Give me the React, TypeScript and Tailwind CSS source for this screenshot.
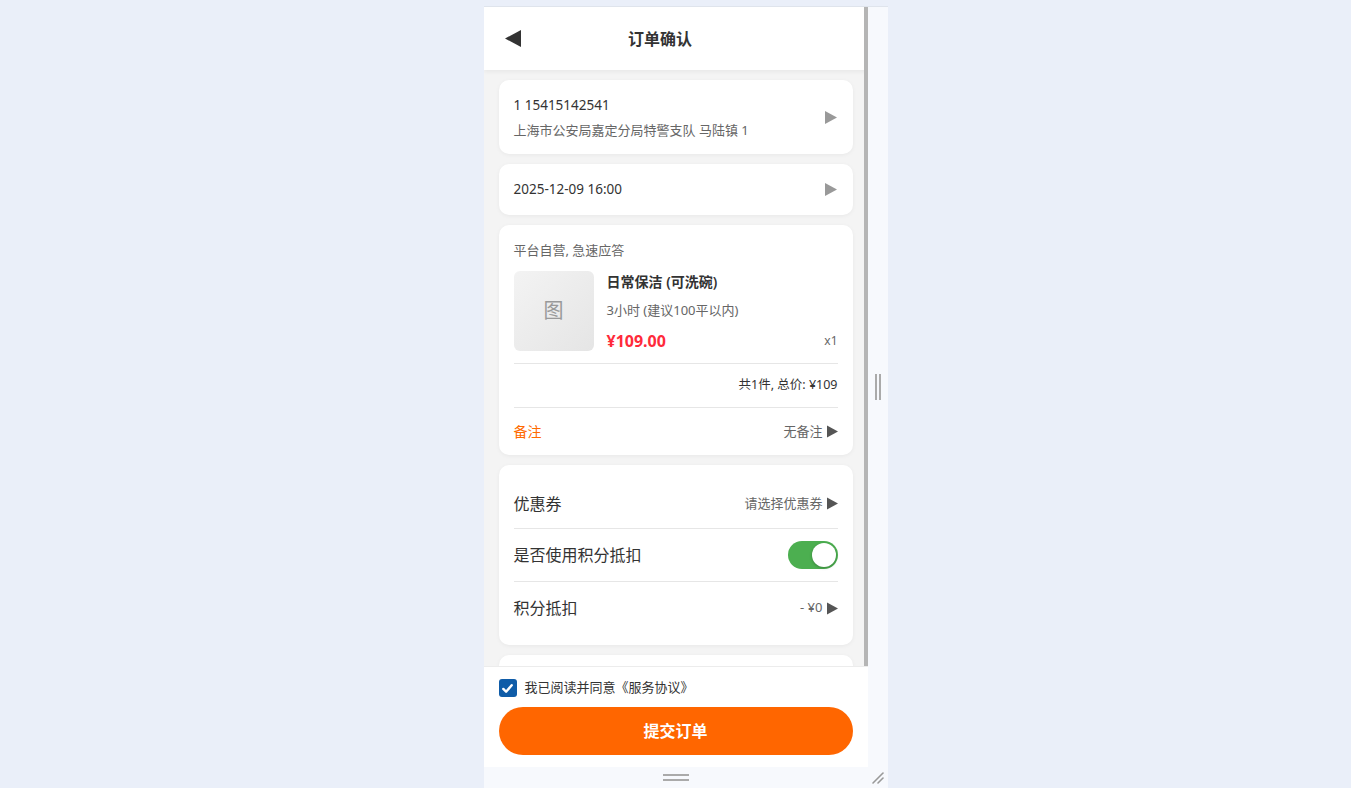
import React, { useState } from 'react';

const Arrow = ({ className = '' }: { className?: string }) => (
  <svg viewBox="0 0 12 13" className={className} fill="currentColor">
    <polygon points="0,0 12,6.5 0,13" />
  </svg>
);

const Card: React.FC<{ className?: string; children: React.ReactNode }> = ({ className = '', children }) => (
  <div className={`bg-white rounded-[10px] shadow-[0_1px_4px_rgba(0,0,0,0.05)] ${className}`}>{children}</div>
);

const Row: React.FC<{ label: string; children: React.ReactNode; className?: string }> = ({ label, children, className = '' }) => (
  <div className={`flex items-center justify-between ${className}`}>
    <span className="text-[16px] text-[#333]">{label}</span>
    {children}
  </div>
);

const App: React.FC = () => {
  const [usePoints, setUsePoints] = useState(true);
  const [agreed, setAgreed] = useState(true);

  return (
    <div className="min-h-screen bg-[#eaeff9] flex justify-center pt-[6px] font-['Noto_Sans','Noto_Sans_CJK_SC',sans-serif]">
      <div className="w-[20px]" />
      <div className="flex flex-col border-t border-[#dfe4ec]">
        <div className="flex">
          {/* phone viewport */}
          <div className="w-[384px] h-[760px] bg-[#f4f4f4] flex flex-col">
            <div className="relative h-[659px] overflow-hidden">
              {/* header */}
              <div className="h-[63px] bg-white flex items-center pl-[21px] shadow-[0_2px_4px_rgba(0,0,0,0.05)] relative z-10">
                <svg viewBox="0 0 16 17" className="w-[16px] h-[17px] text-[#333]" fill="currentColor">
                  <polygon points="16,0 0,8.5 16,17" />
                </svg>
                <h1 className="flex-1 text-center pr-[68px] text-[16px] font-semibold text-[#333]">订单确认</h1>
              </div>

              <div className="flex flex-col gap-[10px] px-[15px] pt-[10px]">
                {/* address */}
                <Card className="h-[74px] pl-[15px] pr-[16px] flex items-center justify-between">
                  <div className="flex flex-col gap-[5px]">
                    <p className="text-[13.5px] leading-[20px] text-[#333]">1 15415142541</p>
                    <p className="text-[13px] leading-[20px] text-[#666]">上海市公安局嘉定分局特警支队 马陆镇 1</p>
                  </div>
                  <Arrow className="w-[12px] h-[13px] text-[#999]" />
                </Card>

                {/* time */}
                <Card className="h-[51px] pl-[15px] pr-[16px] flex items-center justify-between">
                  <span className="text-[13.5px] text-[#333]">2025-12-09 16:00</span>
                  <Arrow className="w-[12px] h-[13px] text-[#999]" />
                </Card>

                {/* product */}
                <Card className="h-[230px] pt-[15px] px-[15px]">
                  <p className="h-[20px] leading-[20px] text-[13px] text-[#666]">平台自营, 急速应答</p>
                  <div className="mt-[11px] h-[80px] flex">
                    <div className="w-[80px] h-[80px] rounded-[6px] bg-gradient-to-br from-[#f3f3f3] to-[#e5e5e5] flex items-center justify-center text-[20px] text-[#999]">
                      图
                    </div>
                    <div className="flex-1 ml-[13px] flex flex-col">
                      <p className="text-[14px] leading-[22px] font-semibold text-[#333]">日常保洁 (可洗碗)</p>
                      <p className="mt-[8px] text-[13px] leading-[18px] text-[#666]">3小时 (建议100平以内)</p>
                      <div className="mt-[10px] flex items-center justify-between h-[24px]">
                        <span className="text-[16px] font-bold text-[#ff2a3a]">¥109.00</span>
                        <span className="text-[12px] text-[#666]">x1</span>
                      </div>
                    </div>
                  </div>
                  <div className="mt-[12px] h-px bg-[#e6e6e6]" />
                  <div className="h-[43px] flex items-center justify-end text-[12.5px] text-[#333]">共1件, 总价: ¥109</div>
                  <div className="h-px bg-[#e6e6e6]" />
                  <div className="h-[47px] flex items-center justify-between">
                    <span className="text-[14px] text-[#ff6a00]">备注</span>
                    <span className="flex items-center gap-[4px] text-[13px] text-[#666]">
                      无备注 <Arrow className="w-[11px] h-[13px] text-[#555]" />
                    </span>
                  </div>
                </Card>

                {/* coupons / points */}
                <Card className="h-[180px] pt-[14px] px-[15px]">
                  <Row label="优惠券" className="h-[49px]">
                    <span className="flex items-center gap-[4px] text-[13px] text-[#666]">
                      请选择优惠券 <Arrow className="w-[11px] h-[13px] text-[#555]" />
                    </span>
                  </Row>
                  <div className="h-px bg-[#e6e6e6]" />
                  <Row label="是否使用积分抵扣" className="h-[52px]">
                    <button
                      onClick={() => setUsePoints(!usePoints)}
                      className={`w-[50px] h-[28px] rounded-full p-[2px] flex items-center ${usePoints ? 'bg-[#4caf50] justify-end' : 'bg-[#ccc] justify-start'}`}
                    >
                      <span className="w-[24px] h-[24px] rounded-full bg-white shadow-[0_1px_3px_rgba(0,0,0,0.25)]" />
                    </button>
                  </Row>
                  <div className="h-px bg-[#e6e6e6]" />
                  <Row label="积分抵扣" className="h-[52px]">
                    <span className="flex items-center gap-[4px] text-[13px] text-[#666]">
                      - ¥0 <Arrow className="w-[11px] h-[13px] text-[#555]" />
                    </span>
                  </Row>
                </Card>

                <Card className="h-[60px]">{null}</Card>
              </div>

              {/* overlay scrollbar */}
              <div className="absolute top-0 right-0 bottom-0 w-[4px] bg-[#b5b5b5] z-20" />
            </div>

            {/* footer */}
            <div className="h-[101px] bg-white border-t border-[#ececec] px-[15px] pt-[12px]">
              <label className="flex items-center gap-[8px] h-[18px] cursor-pointer" onClick={() => setAgreed(!agreed)}>
                <span className={`w-[18px] h-[18px] rounded-[3px] flex items-center justify-center ${agreed ? 'bg-[#0f5ca8]' : 'border border-[#999] bg-white'}`}>
                  {agreed && (
                    <svg viewBox="0 0 14 14" className="w-[13px] h-[13px]" fill="none" stroke="white" strokeWidth="2.6" strokeLinecap="round" strokeLinejoin="round">
                      <polyline points="2.5,7.5 5.5,10.5 11.5,3.5" />
                    </svg>
                  )}
                </span>
                <span className="text-[13px] text-[#333]">我已阅读并同意《服务协议》</span>
              </label>
              <button className="mt-[10px] w-full h-[48px] rounded-full bg-[#ff6600] text-white text-[16px] font-bold">提交订单</button>
            </div>
          </div>

          {/* side resize panel */}
          <div className="w-[20px] h-[760px] bg-[#f7f9fd] flex items-center justify-center gap-[2px]">
            <span className="w-[2px] h-[26px] bg-[#aaa]" />
            <span className="w-[2px] h-[26px] bg-[#aaa]" />
          </div>
        </div>

        {/* bottom resize strip */}
        <div className="flex h-[21px] bg-[#f7f9fd]">
          <div className="w-[384px] flex flex-col items-center justify-center gap-[3px]">
            <span className="w-[26px] h-[2px] bg-[#aaa]" />
            <span className="w-[26px] h-[2px] bg-[#aaa]" />
          </div>
          <div className="w-[20px] flex items-center justify-center">
            <svg viewBox="0 0 14 14" className="w-[14px] h-[14px]" stroke="#999" strokeWidth="1.6" strokeLinecap="round">
              <line x1="2" y1="12" x2="12" y2="2" />
              <line x1="7" y1="12" x2="12" y2="7" />
            </svg>
          </div>
        </div>
      </div>
    </div>
  );
};

export default App;
